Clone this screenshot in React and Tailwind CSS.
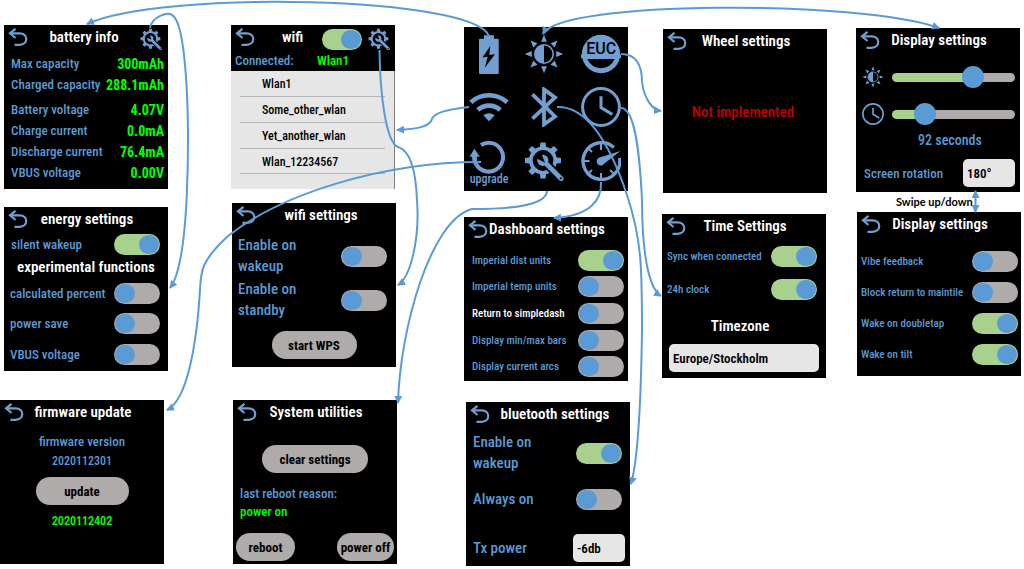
import React, { useId } from 'react';

const ICON = '#729fcf';
const LINE = '#5b9bd5';

function BackIcon() {
  return (
    <svg viewBox="0 0 20 18" className="h-[18px] w-5" fill="none" stroke={ICON} strokeWidth="2.2">
      <path d="M7.5 0.8 L2 5.3 L7.5 10" />
      <path d="M2 5.3 H11.5 C20.5 5.3 20.5 16.8 11.5 16.8 H6.5" />
    </svg>
  );
}

function GearIcon({ className }) {
  return (
    <svg viewBox="0 0 40 40" className={className}>
      <g fill={ICON}>
        {[0, 45, 90, 135, 180, 225, 270, 315].map((a) => (
          <path key={a} d="M15.8 7 L16.4 1.5 H21.6 L22.2 7 Z" transform={`rotate(${a} 19 19.5)`} />
        ))}
      </g>
      <circle cx="19" cy="19.5" r="12.2" fill="none" stroke={ICON} strokeWidth="3.6" />
      <path d="M21 21.5 L37.5 38" stroke="#000" strokeWidth="8.4" />
      <path d="M20 20.5 L37.2 37.7" stroke={ICON} strokeWidth="4.8" strokeLinecap="round" />
      <circle cx="18.8" cy="19.3" r="5.6" fill={ICON} />
      <path d="M19.6 20.2 L12.5 16.5 L16.5 12.5 Z" fill="#000" stroke="#000" strokeWidth="1.5" />
      <circle cx="36.8" cy="37.3" r="1.1" fill="#000" />
    </svg>
  );
}

function BatteryIcon() {
  return (
    <svg viewBox="0 0 40 40" className="size-10">
      <path d="M15 1.3 H25 V4.7 H28.7 Q29.7 4.7 29.7 5.7 V39 Q29.7 40 28.7 40 H11 Q10 40 10 39 V5.7 Q10 4.7 11 4.7 H15 Z" fill={ICON} />
      <path d="M21.3 12 L13.5 23.6 L18.7 22.8 L15.8 33.7 L26 20.2 L20.2 21 Z" fill="#000" />
    </svg>
  );
}

function SunIcon({ className }) {
  return (
    <svg viewBox="0 0 40 40" className={className}>
      <g fill={ICON}>
        {[0, 45, 90, 135, 180, 225, 270, 315].map((a) => (
          <path key={a} d="M20 0.8 L22.9 7.8 H17.1 Z" transform={`rotate(${a} 20 20)`} />
        ))}
        <path d="M20 11 A9 9 0 0 0 20 29 Z" />
      </g>
      <circle cx="20" cy="20" r="9.2" fill="none" stroke={ICON} strokeWidth="1.6" />
    </svg>
  );
}

function EucIcon() {
  return (
    <svg viewBox="0 0 40 40" className="size-10">
      <circle cx="20" cy="20" r="19.2" fill={ICON} />
      <path d="M0 20.5 H40 V24 H0 Z" fill={ICON} />
      <path d="M6.3 25 H33.7 Q29.5 34 20 34.3 Q10.5 34 6.3 25 Z" fill="#000" />
      <text x="20.3" y="20.3" textAnchor="middle" fontSize="16" fontWeight="500" fontFamily="Roboto, sans-serif">EUC</text>
    </svg>
  );
}

function WifiIcon() {
  return (
    <svg viewBox="0 0 40 40" className="size-10" fill="none" stroke={ICON} strokeWidth="4.6">
      <path d="M1.8 15.3 A27 27 0 0 1 38.2 15.3" />
      <path d="M8.8 23 A16.5 16.5 0 0 1 31.2 23" />
      <path d="M14.3 28.2 Q20 24.2 25.7 28.2 L20 34.2 Z" fill={ICON} stroke="none" />
    </svg>
  );
}

function BluetoothIcon() {
  return (
    <svg viewBox="0 0 40 40" className="size-10" fill="none" stroke={ICON} strokeWidth="3.8">
      <path d="M8.5 7.3 L31 29.5 L20 37.4 V2.4 L31 10.5 L8.5 31.6" />
    </svg>
  );
}

function ClockIcon({ className }) {
  return (
    <svg viewBox="0 0 40 40" className={className} fill="none" stroke={ICON} strokeWidth="3">
      <circle cx="20" cy="20" r="18.4" />
      <path d="M20 9.3 V20.6 L31.3 27.4" />
    </svg>
  );
}

function UpgradeIcon() {
  return (
    <svg viewBox="0 0 40 36" className="h-9 w-10">
      <path d="M12 7 A14.4 14.4 0 1 1 7 26" fill="none" stroke={ICON} strokeWidth="4" />
      <path d="M0.5 18.8 L5.4 10.8 L10.8 18.8 H7.8 Q7.6 22.5 9 25.5 L5 27 Q3 23 3 18.8 Z" fill={ICON} />
    </svg>
  );
}

function GaugeIcon() {
  return (
    <svg viewBox="0 0 40 40" className="size-10">
      <g fill="none" stroke={ICON}>
        <path d="M38.6 17 A18.4 18.4 0 1 1 32.8 6.4" strokeWidth="3.4" />
        <g strokeWidth="2">
          <path d="M20 2 V9" />
          <path d="M20 32 V38" />
          <path d="M2 20 H8.5" />
          <path d="M7.5 7.5 L11 11" />
          <path d="M7.5 32.5 L11 29" />
          <path d="M32.5 32.5 L29 29" />
        </g>
      </g>
      <path d="M39.5 10 L18.5 16.4 A4.2 4.2 0 1 0 23.4 22.6 Z" fill={ICON} />
    </svg>
  );
}

function Toggle({ id, on, className = 'w-[46px]' }) {
  return (
    <input
      id={id}
      type="checkbox"
      role="switch"
      defaultChecked={on}
      className={`h-[21px] shrink-0 appearance-none rounded-full bg-[#afabab] p-px before:block before:h-[19px] before:w-5 before:rounded-full before:bg-[#5b9bd5] checked:bg-[#a9d18e] checked:before:ml-auto ${className}`}
    />
  );
}

const BODY = 'text-[13px] font-medium text-[#5b9bd5]';
const SMALL = 'text-[11px] font-medium text-[#5b9bd5]';
const LARGE = 'text-[15px] leading-[21px] font-medium text-[#5b9bd5]';

function ToggleRow({ label, on, className, labelClass = BODY }) {
  const id = useId();
  return (
    <div className={`flex items-center justify-between ${className}`}>
      <label htmlFor={id} className={labelClass}>{label}</label>
      <Toggle id={id} on={on} />
    </div>
  );
}

function Picker({ id, value, options, className }) {
  return (
    <select
      id={id}
      defaultValue={value}
      className={`h-7 appearance-none rounded-[5px] bg-[#e7e6e6] px-1 text-[13px] font-semibold text-black ${className}`}
    >
      {options.map((o) => <option key={o}>{o}</option>)}
    </select>
  );
}

function PillButton({ children, className = '' }) {
  return (
    <button type="button" className={`h-7 rounded-full bg-[#afabab] text-center text-[13px] font-bold text-black ${className}`}>
      {children}
    </button>
  );
}

function Screen({ title, place, action, titleClass = 'pr-[22px]', children }) {
  return (
    <section className={`absolute flex size-[164px] flex-col bg-black whitespace-nowrap ${place}`}>
      <header className="flex h-6 shrink-0 items-center pl-1">
        <button type="button" aria-label="Back" className="w-5"><BackIcon /></button>
        <h2 className={`flex-1 text-center text-[15px] font-semibold text-white ${titleClass}`}>{title}</h2>
        {action}
      </header>
      {children}
    </section>
  );
}

const readings = [
  ['Max capacity', '300mAh'],
  ['Charged capacity', '288.1mAh'],
  ['Battery voltage', '4.07V'],
  ['Charge current', '0.0mA'],
  ['Discharge current', '76.4mA'],
  ['VBUS voltage', '0.00V'],
];

const tiles = [
  ['Battery', <BatteryIcon />],
  ['Display', <SunIcon className="size-10" />],
  ['Wheel', <EucIcon />],
  ['Wifi', <WifiIcon />],
  ['Bluetooth', <BluetoothIcon />],
  ['Time', <ClockIcon className="size-10" />],
  ['Upgrade', <span className="flex flex-col items-center text-xs leading-[10px] font-medium text-[#729fcf]"><UpgradeIcon />upgrade</span>],
  ['Utilities', <GearIcon className="size-10" />],
  ['Dashboard', <GaugeIcon />],
];

const links = [
  'M489 36 C474 -4 160 -10 87 24',
  'M150 28 C152 16 168 12 172 15 C186 22 190 110 187 190 C185 240 180 275 170 288',
  'M379.5 50 C380 95 386 142 398 147 C412 151 416 175 417 200 C420 240 410 278 398 285',
  'M469 107 C450 109 434 112 432 119 C430 127 416 129 397 130',
  'M481 162 C380 162 280 195 228 236 C200 262 201 272 200 290 C197 340 188 400 167 410',
  'M547 191 C546 207 505 209 472 209 C430 220 400 330 398 403',
  'M601 182 C602 200 590 216 554 218',
  'M557 107 C590 106 612 150 627 195 C642 240 642 270 642 330 C641 400 638 460 631 484',
  'M621 108 C636 108 640 160 642 200 C642 250 648 288 661 296',
  'M621 54 C636 54 642 65 642 82 C644 98 652 110 661 111',
];

function Links() {
  return (
    <svg viewBox="0 0 1024 569" width="1024" height="569" className="pointer-events-none absolute top-0 left-0" fill="none" stroke={LINE} strokeWidth="2">
      <defs>
        <marker id="tip" viewBox="0 0 8 8" refX="7" refY="4" markerWidth="8" markerHeight="8" markerUnits="userSpaceOnUse" orient="auto-start-reverse">
          <path d="M0 0 L8 4 L0 8 Z" fill={LINE} stroke="none" />
        </marker>
      </defs>
      {links.map((d) => <path key={d} d={d} markerEnd="url(#tip)" />)}
      <path d="M543 34 C560 0 860 0 939 28" markerStart="url(#tip)" markerEnd="url(#tip)" />
      <path d="M975.5 191 V212" markerStart="url(#tip)" markerEnd="url(#tip)" />
    </svg>
  );
}

const range =
  'h-[9px] w-[123px] appearance-none rounded-full [&::-webkit-slider-thumb]:size-[22px] [&::-webkit-slider-thumb]:appearance-none [&::-webkit-slider-thumb]:rounded-full [&::-webkit-slider-thumb]:bg-[#5b9bd5]';

export default function App() {
  return (
    <main className="relative min-h-screen w-full overflow-hidden bg-white font-['Roboto_Condensed','Liberation_Sans_Narrow',sans-serif] leading-none">
      <Screen title="battery info" place="top-[25px] left-1" titleClass="" action={<button type="button" aria-label="Energy settings" className="pt-1 pr-[6px]"><GearIcon className="size-[22px]" /></button>}>
        <dl className="flex flex-col pt-1 pr-[4px] pl-[7px]">
          {readings.map(([name, value], i) => (
            <div key={name} className={`flex h-[21px] items-center justify-between ${i === 2 ? 'mt-1' : ''}`}>
              <dt className={BODY}>{name}</dt>
              <dd className="text-sm font-bold text-[#00ff00]">{value}</dd>
            </div>
          ))}
        </dl>
      </Screen>

      <Screen title="energy settings" place="top-[207px] left-1">
        <ToggleRow label="silent wakeup" on className="h-[26px] pr-2 pl-[7px]" />
        <h3 className="h-[21px] text-center text-[15px] leading-[21px] font-semibold text-white">experimental functions</h3>
        <ToggleRow label="calculated percent" className="h-[30px] pr-2 pl-1.5" />
        <ToggleRow label="power save" className="h-[30px] pr-2 pl-1.5" />
        <ToggleRow label="VBUS voltage" className="h-8 pr-2 pl-1.5" />
      </Screen>

      <Screen title="firmware update" place="top-[400px] left-0">
        <div className="flex flex-col items-center">
          <p className="pt-2 text-center text-[13px] leading-[19px] font-medium text-[#5b9bd5]">firmware version<br /><span className="text-xs">2020112301</span></p>
          <PillButton className="mt-[7px] w-[93px]">update</PillButton>
          <p className="mt-[7px] text-xs leading-[19px] font-semibold text-[#00ff00]">2020112402</p>
        </div>
      </Screen>

      <Screen
        title="wifi"
        place="top-[25px] left-[231px]"
        titleClass="pl-2"
        action={
          <span className="flex items-center gap-1.5 pt-1 pr-[5px]">
            <Toggle id="wifi-on" on className="w-10" />
            <button type="button" aria-label="Wifi settings"><GearIcon className="size-[22px]" /></button>
          </span>
        }
      >
        <p className="flex h-[22px] shrink-0 items-center pr-[46px] pl-1 text-[13px] font-medium text-[#5b9bd5]">
          <label htmlFor="wifi-on">Connected:</label>
          <span className="ml-auto font-semibold text-[#00ff00]">Wlan1</span>
        </p>
        <ul className="flex-1 border-r border-[#7f7f7f] bg-[#e7e6e6] px-[9px] text-xs font-medium text-black">
          {['Wlan1', 'Some_other_wlan', 'Yet_another_wlan', 'Wlan_12234567'].map((n) => (
            <li key={n} className="h-[26px] border-b border-[#b5b5b5] pl-[22px] leading-[26px] last:h-[25px]">{n}</li>
          ))}
        </ul>
      </Screen>

      <Screen title="wifi settings" place="top-[203px] left-[232px]" titleClass="pr-2.5">
        <div className="flex flex-col gap-0.5 pt-2 pr-[9px] pl-1.5">
          <ToggleRow label={<>Enable on<br />wakeup</>} labelClass={LARGE} />
          <ToggleRow label={<>Enable on<br />standby</>} labelClass={LARGE} />
        </div>
        <PillButton className="mt-2.5 w-[85px] self-center">start WPS</PillButton>
      </Screen>

      <Screen title="System utilities" place="top-[400px] left-[233px]">
        <PillButton className="mt-[21px] w-[106px] self-center">clear settings</PillButton>
        <p className="mt-3 pl-[7px] text-[13px] leading-[18px] font-medium text-[#5b9bd5]">last reboot reason:<br /><span className="text-[#00ff00]">power on</span></p>
        <div className="mt-3 flex justify-between px-[3px]">
          <PillButton className="w-[59px]">reboot</PillButton>
          <PillButton className="w-[57px]">power off</PillButton>
        </div>
      </Screen>

      <nav className="absolute top-[27px] left-[464px] grid size-[164px] grid-cols-[50px_59px_55px] grid-rows-[54px_52px_56px] place-items-center bg-black">
        {tiles.map(([name, icon]) => <button key={name} type="button" aria-label={name}>{icon}</button>)}
      </nav>

      <Screen title="Dashboard settings" place="top-[217px] left-[464px]">
        <div className="flex flex-col pt-1.5 pr-1 pl-2">
          <ToggleRow label="Imperial dist units" on className="h-[26px]" labelClass={SMALL} />
          <ToggleRow label="Imperial temp units" className="h-[27px]" labelClass={SMALL} />
          <ToggleRow label="Return to simpledash" className="h-[27px]" labelClass="text-[11px] font-medium text-white" />
          <ToggleRow label="Display min/max bars" className="h-[26px]" labelClass={SMALL} />
          <ToggleRow label="Display current arcs" className="h-[26px]" labelClass={SMALL} />
        </div>
      </Screen>

      <Screen title="bluetooth settings" place="top-[402px] left-[466px]" titleClass="pr-2.5">
        <div className="flex flex-col pt-[6px] pr-2 pl-[7px]">
          <ToggleRow label={<>Enable on<br />wakeup</>} on labelClass={LARGE} />
          <ToggleRow label="Always on" className="h-[50px]" labelClass={LARGE} />
        </div>
        <div className="mt-[10px] flex items-center justify-between pr-[5px] pl-[7px]">
          <label htmlFor="tx" className={LARGE}>Tx power</label>
          <Picker id="tx" value="-6db" options={['-6db', '0db']} className="w-[52px]" />
        </div>
      </Screen>

      <Screen title="Wheel settings" place="top-[29px] left-[663px]">
        <p className="pt-[50px] pr-1 text-center text-[15px] leading-[18px] font-medium text-[#c00000]">Not implemented</p>
      </Screen>

      <Screen title="Time Settings" place="top-[214px] left-[662px]">
        <div className="flex flex-col pt-0.5 pr-[9px] pl-[5px]">
          <ToggleRow label="Sync when connected" on className="h-[33px]" labelClass={SMALL} />
          <ToggleRow label="24h clock" on className="h-[33px]" labelClass={SMALL} />
        </div>
        <label htmlFor="zone" className="mt-[11px] h-[18px] pr-2 text-center text-[15px] leading-[18px] font-semibold text-white">Timezone</label>
        <Picker id="zone" value="Europe/Stockholm" options={['Europe/Stockholm', 'UTC']} className="mx-[7px] mt-[9px]" />
      </Screen>

      <Screen title="Display settings" place="top-7 left-[856px]">
        <div className="flex h-[50px] items-center justify-between pr-[5px] pl-1.5">
          <SunIcon className="size-[22px]" />
          <input type="range" aria-label="Brightness" defaultValue="69" className={`${range} bg-[linear-gradient(to_right,#a9d18e_66%,#afabab_66%)]`} />
        </div>
        <div className="flex h-6 items-center justify-between pr-[5px] pl-1.5">
          <ClockIcon className="size-[22px]" />
          <input type="range" aria-label="Screen timeout" defaultValue="22" className={`${range} bg-[linear-gradient(to_right,#a9d18e_27%,#afabab_27%)]`} />
        </div>
        <p className="pt-1 pl-6 text-center text-sm leading-5 font-medium text-[#5b9bd5]">92 seconds</p>
        <div className="mt-[9px] flex items-center justify-between pr-[5px] pl-2">
          <label htmlFor="rotation" className={BODY}>Screen rotation</label>
          <Picker id="rotation" value="180°" options={['0°', '90°', '180°', '270°']} className="w-[52px]" />
        </div>
      </Screen>

      <p className="absolute top-[196px] left-[896px] font-['Lato',sans-serif] text-[11px] leading-3 font-bold text-black">Swipe up/down</p>

      <Screen title="Display settings" place="top-[212px] left-[857px]">
        <div className="flex flex-col pt-2.5 pr-[3px] pl-1">
          <ToggleRow label="Vibe feedback" className="h-[31px]" labelClass={SMALL} />
          <ToggleRow label="Block return to maintile" className="h-[31px]" labelClass={SMALL} />
          <ToggleRow label="Wake on doubletap" on className="h-[31px]" labelClass={SMALL} />
          <ToggleRow label="Wake on tilt" on className="h-[31px]" labelClass={SMALL} />
        </div>
      </Screen>

      <Links />
    </main>
  );
}
